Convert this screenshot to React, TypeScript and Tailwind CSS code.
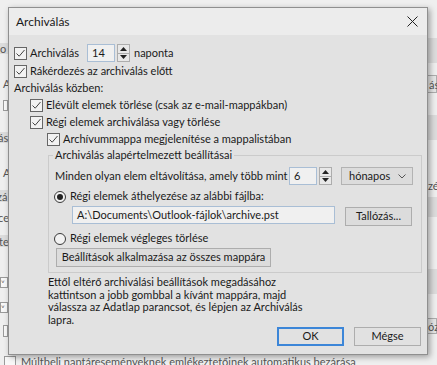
import React from 'react';

const Check = () => (
  <span className="flex h-[13px] w-[13px] shrink-0 items-center justify-center border border-[#666] bg-[#f2f2f2]">
    <svg width="11" height="11" viewBox="0 0 11 11">
      <path d="M1.5 5.5 L4.2 8.2 L9.5 2" fill="none" stroke="#444" strokeWidth="1" />
    </svg>
  </span>
);

const Radio = ({ on }: { on?: boolean }) => (
  <span className="flex h-[12px] w-[12px] shrink-0 items-center justify-center rounded-full border border-[#3a3a3a] bg-[#f2f2f2]">
    {on && <span className="h-[6px] w-[6px] rounded-full bg-[#222]" />}
  </span>
);

const Spin = () => (
  <div className="flex h-[18px] w-[13px] shrink-0 flex-col border border-[#adadad] bg-[#e8e8e8]">
    <div className="flex flex-1 items-center justify-center border-b border-[#adadad]">
      <svg width="7" height="4" viewBox="0 0 7 4">
        <path d="M0 4 L3.5 0 L7 4Z" fill="#222" />
      </svg>
    </div>
    <div className="flex flex-1 items-center justify-center">
      <svg width="7" height="4" viewBox="0 0 7 4">
        <path d="M0 0 L3.5 4 L7 0Z" fill="#222" />
      </svg>
    </div>
  </div>
);

const Row = ({ pl, children }: { pl: string; children: React.ReactNode }) => (
  <div className={`flex h-[17px] items-center gap-[3px] ${pl}`}>{children}</div>
);

export default function App() {
  return (
    <div className="relative h-[365px] w-[437px] overflow-hidden bg-[#efefef] font-['Lato',sans-serif] text-[11px] text-[#1a1a1a]">
      {/* Outlook-beállítások ablak a párbeszédpanel mögött */}
      <div className="flex h-[355px] text-[#555]">
        <div className="flex w-[8px] flex-col overflow-hidden whitespace-nowrap">
          <div className="mt-[43px] flex h-[11px] items-center bg-[#dcdcdc] leading-none">o</div>
          <div className="mt-[24px] pl-[3px] leading-[11px]">A</div>
          <div className="ml-[3px] mt-[11px] h-[11px] border border-[#9a9a9a] bg-[#f8f8f8]" />
          <div className="mt-[21px] flex h-[11px] items-center bg-[#dcdcdc] -ml-[2px] leading-none">ás</div>
          <div className="mt-[24px] pl-[3px] leading-[11px]">A</div>
          <div className="mt-[12px] flex h-[12px] items-center bg-[#dcdcdc] -ml-[3px] leading-none">zá</div>
          <div className="mt-[10px] -ml-[2px] leading-[11px]">ce</div>
          <div className="mt-[12px] flex h-[12px] items-center bg-[#dcdcdc] -ml-[1px] leading-none">te</div>
          <div className="mt-[30px] flex h-[11px] items-center border border-[#9a9a9a] bg-[#f8f8f8] text-[8px] leading-none">˅</div>
          <div className="mt-[14px] flex h-[11px] items-center border border-[#9a9a9a] bg-[#f8f8f8] text-[8px] leading-none">˅</div>
          <div className="ml-[3px] mt-[12px] h-[12px] border border-[#9a9a9a] bg-[#f8f8f8]" />
        </div>
        <div className="flex-1" />
        <div className="flex w-[10px] flex-col overflow-hidden whitespace-nowrap">
          <div className="mt-[38px] h-[25px] bg-[#dcdcdc]" />
          <div className="mt-[12px] flex h-[18px] items-center border border-[#adadad] bg-[#e6e6e6] pl-[1px] leading-none">ás.</div>
          <div className="mt-[22px] h-[25px] bg-[#dcdcdc]" />
          <div className="mt-[40px] pl-[1px] leading-[11px]">zé</div>
          <div className="mt-[6px] h-[20px] bg-[#dcdcdc]" />
          <div className="mt-[52px] h-[25px] bg-[#dcdcdc]" />
          <div className="mt-[24px] flex h-[16px] items-center border border-[#adadad] bg-[#e6e6e6] leading-none">óz</div>
        </div>
      </div>
      <div className="flex h-[10px] items-start gap-[5px] pl-[4px] text-[#555]">
        <span className="mt-[1px] h-[12px] w-[12px] border border-[#9a9a9a] bg-[#f8f8f8]" />
        <span className="leading-[14px]">Múltbeli naptáreseményeknek emlékeztetőinek automatikus bezárása</span>
      </div>

      {/* Archiválás párbeszédpanel */}
      <div className="absolute left-[8px] top-[7px] flex h-[348px] w-[420px] flex-col border border-[#8f8f8f] bg-[#e2e2e2] shadow-[2px_2px_6px_rgba(0,0,0,0.35)]">
        <div className="flex h-[27px] shrink-0 items-center justify-between bg-[#ececec] pl-[7px] pr-[9px]">
          <span className="mt-[1px] text-[12px]">Archiválás</span>
          <svg width="11" height="11" viewBox="0 0 11 11">
            <path d="M0.5 0.5 L10.5 10.5 M10.5 0.5 L0.5 10.5" stroke="#222" strokeWidth="1" />
          </svg>
        </div>

        <div className="flex flex-col pt-[8px]">
          <div className="flex h-[20px] items-center pl-[5px]">
            <Check />
            <span className="ml-[3px] w-[57px]">Archiválás</span>
            <div className="flex h-[18px] w-[28px] items-center border border-[#a9bed5] bg-[#f0f0f0] pl-[4px]">14</div>
            <div className="ml-[2px]">
              <Spin />
            </div>
            <span className="ml-[4px]">naponta</span>
          </div>
          <Row pl="pl-[5px]">
            <Check />
            <span>Rákérdezés az archiválás előtt</span>
          </Row>
          <Row pl="pl-[5px]">
            <span>Archiválás közben:</span>
          </Row>
          <Row pl="pl-[21px]">
            <Check />
            <span>Elévült elemek törlése (csak az e-mail-mappákban)</span>
          </Row>
          <Row pl="pl-[21px]">
            <Check />
            <span>Régi elemek archiválása vagy törlése</span>
          </Row>
          <Row pl="pl-[38px]">
            <Check />
            <span>Archívummappa megjelenítése a mappalistában</span>
          </Row>

          <fieldset className="ml-[39px] mr-[5px] border border-[#cbcbcb] pb-[5px]">
            <legend className="ml-[4px] px-[2px] leading-[14px]">Archiválás alapértelmezett beállításai</legend>
            <div className="mt-[5px] flex h-[18px] items-center pl-[6px]">
              <span className="w-[234px]">Minden olyan elem eltávolítása, amely több mint</span>
              <div className="flex h-[18px] w-[28px] items-center border border-[#a9bed5] bg-[#f0f0f0] pl-[4px]">6</div>
              <div className="ml-[2px]">
                <Spin />
              </div>
              <div className="ml-[9px] flex h-[18px] w-[72px] items-center justify-between border border-[#b3b3b3] bg-[#dcdcdc] pl-[7px] pr-[6px]">
                <span>hónapos</span>
                <svg width="8" height="5" viewBox="0 0 8 5">
                  <path d="M0.5 0.5 L4 4 L7.5 0.5" fill="none" stroke="#555" strokeWidth="1" />
                </svg>
              </div>
            </div>
            <div className="mt-[3px] flex h-[17px] items-center gap-[4px] pl-[5px]">
              <Radio on />
              <span>Régi elemek áthelyezése az alábbi fájlba:</span>
            </div>
            <div className="mt-[1px] flex items-start pl-[23px]">
              <div className="flex h-[18px] w-[263px] items-center border border-[#a9bed5] bg-[#f0f0f0] pl-[4px]">
                A:\Documents\Outlook-fájlok\archive.pst
              </div>
              <button className="ml-[10px] mt-[1px] flex h-[19px] w-[67px] items-center justify-center border border-[#adadad] bg-[#dcdcdc]">
                Tallózás...
              </button>
            </div>
            <div className="mt-[4px] flex h-[17px] items-center gap-[4px] pl-[5px]">
              <Radio />
              <span>Régi elemek végleges törlése</span>
            </div>
            <div className="mt-[1px] pl-[7px]">
              <button className="flex h-[19px] w-[215px] items-center justify-center border border-[#adadad] bg-[#dcdcdc]">
                Beállítások alkalmazása az összes mappára
              </button>
            </div>
          </fieldset>

          <p className="ml-[39px] mt-[3px] leading-[12.5px]">
            Ettől eltérő archiválási beállítások megadásához
            <br />
            kattintson a jobb gombbal a kívánt mappára, majd
            <br />
            válassza az Adatlap parancsot, és lépjen az Archiválás
            <br />
            lapra.
          </p>

          <div className="mt-[1px] flex justify-end gap-[10px] pr-[6px]">
            <button className="flex h-[19px] w-[67px] items-center justify-center border-2 border-[#3c86d8] bg-[#e1e1e1]">OK</button>
            <button className="flex h-[19px] w-[67px] items-center justify-center border border-[#adadad] bg-[#e1e1e1]">Mégse</button>
          </div>
        </div>
      </div>
    </div>
  );
}
